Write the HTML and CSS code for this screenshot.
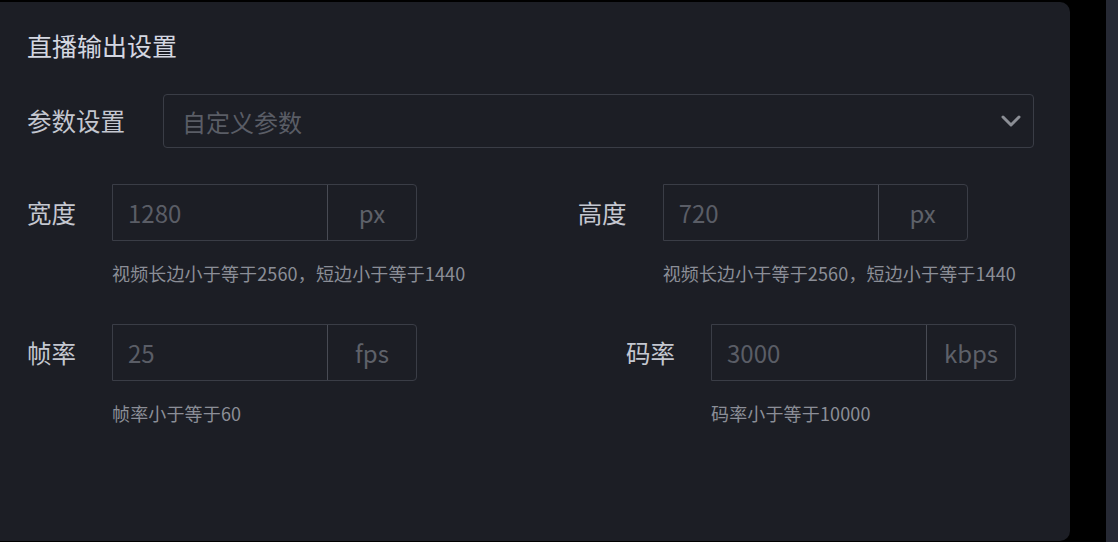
FILE: index.html
```html
<!DOCTYPE html>
<html lang="zh-CN">
<head>
<meta charset="utf-8">
<link rel="stylesheet" href="styles.css">
</head>
<body>
<div class="panel">
  <div class="title">直播输出设置</div>
  <div class="select-row">
    <div class="select-label">参数设置</div>
    <div class="select">
      <span class="select-text">自定义参数</span>
      <svg class="chevron" width="20" height="12" viewBox="0 0 20 12"><path d="M2 2 L10 10 L18 2" fill="none" stroke="#8b8e95" stroke-width="3" stroke-linecap="round" stroke-linejoin="round"/></svg>
    </div>
  </div>
  <div class="row row-first">
    <div class="field">
      <div class="field-main">
        <div class="label">宽度</div>
        <div class="input-group"><div class="input">1280</div><div class="suffix">px</div></div>
      </div>
      <div class="hint">视频长边小于等于2560，短边小于等于1440</div>
    </div>
    <div class="field">
      <div class="field-main">
        <div class="label">高度</div>
        <div class="input-group"><div class="input">720</div><div class="suffix">px</div></div>
      </div>
      <div class="hint">视频长边小于等于2560，短边小于等于1440</div>
    </div>
  </div>
  <div class="row row-second">
    <div class="field">
      <div class="field-main">
        <div class="label">帧率</div>
        <div class="input-group"><div class="input">25</div><div class="suffix">fps</div></div>
      </div>
      <div class="hint">帧率小于等于60</div>
    </div>
    <div class="field">
      <div class="field-main">
        <div class="label">码率</div>
        <div class="input-group"><div class="input">3000</div><div class="suffix">kbps</div></div>
      </div>
      <div class="hint">码率小于等于10000</div>
    </div>
  </div>
</div>
<div class="strip"></div>
</body>
</html>
```
FILE: styles.css
```css
html, body {
  margin: 0;
  padding: 0;
  height: 100%;
}
body {
  background: #000;
  display: flex;
  font-family: "Noto Sans CJK SC", "Noto Sans", sans-serif;
  overflow: hidden;
}
.panel {
  width: 1070px;
  height: 539px;
  margin-top: 2px;
  background: #1c1e25;
  border-radius: 0 10px 10px 0;
  padding: 27px 0 0 27px;
  box-sizing: border-box;
  flex-shrink: 0;
}
.strip {
  width: 12px;
  height: 100%;
  margin-left: 36px;
  background: #262934;
}
.title {
  font-size: 25px;
  line-height: 32px;
  color: #d4d7e1;
}
.select-row {
  display: flex;
  align-items: center;
  margin-top: 33px;
}
.select-label {
  width: 136px;
  font-size: 24.5px;
  line-height: 32px;
  color: #c4c7d0;
}
.select {
  width: 871px;
  height: 54px;
  box-sizing: border-box;
  border: 1px solid #3a3d46;
  border-radius: 4px;
  display: flex;
  align-items: center;
  justify-content: space-between;
  padding: 0 12px 0 18px;
}
.select-text {
  font-size: 24px;
  color: #5a5d66;
}
.chevron {
  display: block;
}
.row {
  display: flex;
  justify-content: space-between;
  width: 989px;
}
.row-first {
  margin-top: 36px;
}
.row-second {
  margin-top: 39px;
}
.field-main {
  display: flex;
  align-items: center;
}
.label {
  width: 85px;
  font-size: 24.5px;
  line-height: 32px;
  color: #c4c7d0;
}
.input-group {
  display: flex;
  height: 57px;
  width: 305px;
  box-sizing: border-box;
  border: 1px solid #3a3d46;
  border-radius: 0 4px 4px 0;
}
.input {
  width: 215px;
  border-right: 1px solid #484b54;
  padding-left: 15px;
  box-sizing: border-box;
  font-size: 24px;
  line-height: 55px;
  color: #5a5d66;
}
.suffix {
  flex: 1;
  text-align: center;
  font-size: 24px;
  line-height: 55px;
  color: #5e6169;
}
.hint {
  margin-top: 20px;
  margin-left: 85px;
  font-size: 18px;
  line-height: 24px;
  letter-spacing: 0.15px;
  color: #8b8e97;
}
```
